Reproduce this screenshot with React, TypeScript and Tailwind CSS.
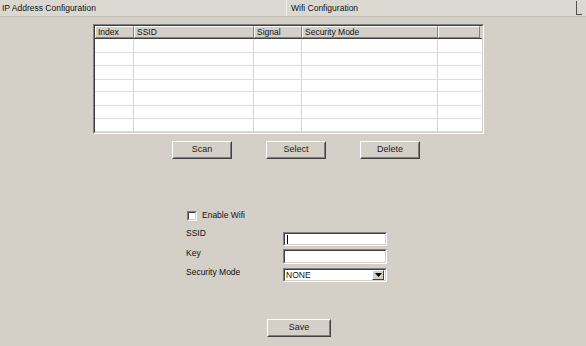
import React from "react";

const font = { fontFamily: '"Liberation Sans", Arial, sans-serif' };

function Btn({ label, w, h }: { label: string; w: string; h: string }) {
  return (
    <div
      className={`${w} ${h} box-border border border-t-white border-l-white border-b-[#404040] border-r-[#404040] bg-[#d4d0c8]`}
    >
      <div className="w-full h-full box-border border border-t-[#d4d0c8] border-l-[#d4d0c8] border-b-[#808080] border-r-[#808080] flex items-center justify-center text-[9px] text-[#222]">
        {label}
      </div>
    </div>
  );
}

function Sunken({ className, children }: { className: string; children?: React.ReactNode }) {
  return (
    <div
      className={`${className} box-border border border-t-[#808080] border-l-[#808080] border-b-white border-r-white`}
    >
      <div className="w-full h-full box-border border border-t-[#404040] border-l-[#404040] border-b-[#d4d0c8] border-r-[#d4d0c8] bg-white relative flex items-center">
        {children}
      </div>
    </div>
  );
}

const rowHeights = ["h-[14px]", "h-[13px]", "h-[14px]", "h-[13px]", "h-[14px]", "h-[13px]", "h-[13px]"];

function HeaderCell({ label }: { label?: string }) {
  return (
    <div className="h-[12px] box-border border border-t-white border-l-white border-b-[#808080] border-r-[#808080] flex items-center pl-[2px] text-[8.5px] leading-none text-[#111] overflow-hidden whitespace-nowrap">
      {label}
    </div>
  );
}

export default function App() {
  return (
    <div className="w-[586px] h-[346px] bg-[#d4d0c8] overflow-hidden text-[#111]" style={font}>
      {/* tab strip */}
      <div className="h-[17px] flex bg-[#dbd8d1] border-b border-[#c4c0b8]">
        <div className="w-[287px] border-r border-[#f0eee9] flex items-center pl-[2px] text-[8.5px]">
          IP Address Configuration
        </div>
        <div className="flex-1 flex items-center pl-[4px] text-[8.5px]">Wifi Configuration</div>
        <div className="w-[10px] flex flex-col pt-[1px]">
          <div className="w-[6px] h-[14px] border-l border-b border-[#505050]" />
        </div>
      </div>

      {/* table */}
      <div className="ml-[93px] mt-[7px]">
        <div className="w-[391px] h-[110px] box-border border border-t-[#808080] border-l-[#808080] border-b-white border-r-white">
          <div className="w-full h-full box-border border border-t-[#404040] border-l-[#404040] border-b-[#d4d0c8] border-r-[#d4d0c8] bg-white flex flex-col">
            <div className="grid grid-cols-[39px_120px_48px_136px_42px] bg-[#d4d0c8] border-b border-[#404040]">
              <HeaderCell label="Index" />
              <HeaderCell label="SSID" />
              <HeaderCell label="Signal" />
              <HeaderCell label="Security Mode" />
              <HeaderCell />
            </div>
            {rowHeights.map((h, i) => (
              <div
                key={i}
                className={`grid grid-cols-[39px_120px_48px_136px_42px] ${h} box-border border-b border-[#dfddd8]`}
              >
                <div className="border-r border-[#d9d7d1]" />
                <div className="border-r border-[#d9d7d1]" />
                <div className="border-r border-[#d9d7d1]" />
                <div className="border-r border-[#d9d7d1]" />
                <div />
              </div>
            ))}
          </div>
        </div>
      </div>

      {/* buttons */}
      <div className="ml-[172px] mt-[7px] flex gap-[34px]">
        <Btn label="Scan" w="w-[60px]" h="h-[18px]" />
        <Btn label="Select" w="w-[60px]" h="h-[18px]" />
        <Btn label="Delete" w="w-[60px]" h="h-[18px]" />
      </div>

      {/* form */}
      <div className="ml-[186px] mt-[50px] flex flex-col">
        <div className="h-[13px] flex items-center gap-[5px] pl-[1px]">
          <div className="w-[10px] h-[10px] box-border border border-t-[#808080] border-l-[#808080] border-b-[#f4f4f4] border-r-[#f4f4f4] bg-white">
            <div className="w-full h-full border border-t-[#404040] border-l-[#404040] border-b-[#d4d0c8] border-r-[#d4d0c8]" />
          </div>
          <span className="text-[8.5px]">Enable Wifi</span>
        </div>

        <div className="mt-[6px] h-[18px] flex">
          <div className="w-[97px] text-[8.5px] leading-[11px]">SSID</div>
          <Sunken className="w-[104px] h-[14px] self-end">
            <div className="ml-[2px] w-px h-[9px] bg-black" />
          </Sunken>
        </div>

        <div className="mt-[2px] h-[16px] flex">
          <div className="w-[97px] text-[8.5px] leading-[11px]">Key</div>
          <Sunken className="w-[104px] h-[15px] self-end" />
        </div>

        <div className="mt-[3px] h-[15px] flex">
          <div className="w-[97px] text-[8.5px] leading-[11px]">Security Mode</div>
          <Sunken className="w-[104px] h-[14px] self-end">
            <span className="pl-[1px] text-[8.5px] flex-1">NONE</span>
            <div className="w-[12px] h-[10px] mr-[1px] box-border border border-t-white border-l-white border-b-[#404040] border-r-[#404040] bg-[#d4d0c8] flex items-center justify-center">
              <svg width="7" height="4" viewBox="0 0 7 4">
                <path d="M0 0 H7 L3.5 4 Z" fill="#000" />
              </svg>
            </div>
          </Sunken>
        </div>
      </div>

      {/* save */}
      <div className="ml-[267px] mt-[37px]">
        <Btn label="Save" w="w-[64px]" h="h-[18px]" />
      </div>
    </div>
  );
}
